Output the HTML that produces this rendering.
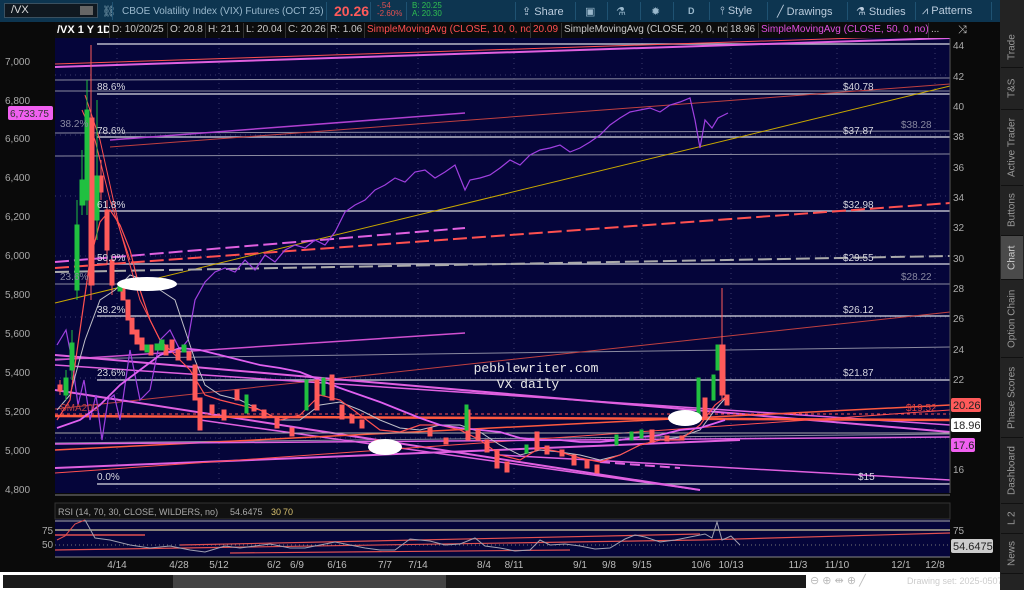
<!DOCTYPE html>
<html><head><meta charset="utf-8">
<style>
*{margin:0;padding:0;box-sizing:border-box}
body{width:1024px;height:590px;background:#0a0a0a;position:relative;overflow:hidden;font-family:"Liberation Sans",sans-serif}
.tb{position:absolute;left:0;top:0;width:1024px;height:22px;background:#0d3550;color:#9ab8cc;font-size:11px}
.tb span{position:absolute;top:5px;white-space:nowrap}
.sep{position:absolute;top:2px;width:1px;height:18px;background:#1f5272}
.info{position:absolute;left:55px;top:22px;height:16px;width:895px;background:#0c0c0c;font-size:10px;color:#c8c8c8;white-space:nowrap}
.info span{position:absolute;top:1px;padding:0 2px;border-right:1px solid #333;height:15px;overflow:hidden;line-height:14px}
.side{position:absolute;left:1000px;top:0;width:24px;height:590px;background:#232323}
.tab{position:absolute;left:1001px;width:22px;color:#9a9a9a;font-size:10px;writing-mode:vertical-rl;transform:rotate(180deg);display:flex;align-items:center;justify-content:center;border-top:1px solid #111}
</style></head><body>
<div class="tb">
 <div style="position:absolute;left:4px;top:3px;width:94px;height:15px;background:#101820;border:1px solid #3a5060;color:#ddd;font-size:11px;padding-left:6px">/VX</div>
 <div style="position:absolute;left:80px;top:6px;width:13px;height:9px;background:#666"></div>
 <span style="left:102px;color:#8ab">⛓</span>
 <div class="sep" style="left:112px"></div>
 <span style="left:122px;font-size:10px;top:6px">CBOE Volatility Index (VIX) Futures (OCT 25)</span>
 <div class="sep" style="left:326px"></div>
 <span style="left:334px;top:3px;color:#ff5a5a;font-size:14px;font-weight:bold">20.26</span>
 <div class="sep" style="left:370px"></div>
 <span style="left:377px;top:2px;color:#e05050;font-size:8px;line-height:8px">-.54<br>-2.60%</span>
 <div class="sep" style="left:406px"></div>
 <span style="left:412px;top:2px;color:#30c050;font-size:8px;line-height:8px">B: 20.25<br>A: 20.30</span>
 <div class="sep" style="left:515px"></div>
 <span style="left:522px;color:#bcd">⇪ Share</span>
 <div class="sep" style="left:575px"></div><span style="left:585px">▣</span>
 <div class="sep" style="left:607px"></div><span style="left:616px">⚗</span>
 <div class="sep" style="left:640px"></div><span style="left:651px">✹</span>
 <div class="sep" style="left:673px"></div><span style="left:688px;font-weight:bold;font-size:9px;top:6px">D</span>
 <div class="sep" style="left:709px"></div><span style="left:720px;color:#bcd">⫯ Style</span>
 <div class="sep" style="left:767px"></div><span style="left:777px;color:#bcd">╱ Drawings</span>
 <div class="sep" style="left:847px"></div><span style="left:856px;color:#bcd">⚗ Studies</span>
 <div class="sep" style="left:915px"></div><span style="left:922px;color:#bcd">⩘ Patterns</span>
 <div class="sep" style="left:991px"></div><span style="left:1005px">☰</span>
</div>
<div class="info">
 <span style="left:0;width:55px;color:#fff;font-weight:bold;font-size:11px">/VX 1 Y 1D</span>
 <span style="left:55px;width:58px">D: 10/20/25</span>
 <span style="left:113px;width:38px">O: 20.8</span>
 <span style="left:151px;width:38px">H: 21.1</span>
 <span style="left:189px;width:42px">L: 20.04</span>
 <span style="left:231px;width:42px">C: 20.26</span>
 <span style="left:273px;width:37px">R: 1.06</span>
 <span style="left:310px;width:166px;color:#ff5050">SimpleMovingAvg (CLOSE, 10, 0, no)</span>
 <span style="left:476px;width:31px;color:#ff5050">20.09</span>
 <span style="left:507px;width:166px">SimpleMovingAvg (CLOSE, 20, 0, no)</span>
 <span style="left:673px;width:31px">18.96</span>
 <span style="left:704px;width:170px;color:#e050e0">SimpleMovingAvg (CLOSE, 50, 0, no)</span>
 <span style="left:874px;border:none">...</span>
</div>
<div style="position:absolute;left:958px;top:24px;color:#ccc;font-size:11px">⤨</div>

<svg style="position:absolute;left:0;top:38px" width="1000" height="534" viewBox="0 38 1000 534">
<rect x="55" y="38" width="895" height="455" fill="#05053a"/>
<rect x="55" y="517" width="895" height="40" fill="#05053a"/>
<g stroke="#3a3a6a" stroke-dasharray="1 4" stroke-width="1">
<line x1="117" y1="38" x2="117" y2="493"/><line x1="219" y1="38" x2="219" y2="493"/><line x1="337" y1="38" x2="337" y2="493"/><line x1="418" y1="38" x2="418" y2="493"/><line x1="514" y1="38" x2="514" y2="493"/><line x1="642" y1="38" x2="642" y2="493"/><line x1="731" y1="38" x2="731" y2="493"/><line x1="837" y1="38" x2="837" y2="493"/><line x1="935" y1="38" x2="935" y2="493"/>
<line x1="55" y1="75" x2="950" y2="75"/><line x1="55" y1="135" x2="950" y2="135"/><line x1="55" y1="196" x2="950" y2="196"/><line x1="55" y1="256" x2="950" y2="256"/><line x1="55" y1="317" x2="950" y2="317"/><line x1="55" y1="378" x2="950" y2="378"/><line x1="55" y1="438" x2="950" y2="438"/>
</g>
<g stroke="#b8b8c8" stroke-width="1.5">
<line x1="97" y1="44" x2="950" y2="44"/>
<line x1="97" y1="94" x2="950" y2="94"/>
<line x1="97" y1="137" x2="950" y2="137"/>
<line x1="97" y1="211" x2="950" y2="211"/>
<line x1="97" y1="264" x2="950" y2="264"/>
<line x1="97" y1="316" x2="950" y2="316"/>
<line x1="97" y1="380" x2="950" y2="380"/>
<line x1="97" y1="484" x2="950" y2="484"/>
</g>
<g stroke="#8a8aa0" stroke-width="1">
<line x1="55" y1="91" x2="950" y2="91"/><line x1="55" y1="80" x2="950" y2="78"/>
<line x1="55" y1="156" x2="950" y2="154"/><line x1="55" y1="284" x2="950" y2="284"/>
<line x1="55" y1="133" x2="950" y2="131"/><line x1="55" y1="359" x2="950" y2="347"/>
<line x1="55" y1="443" x2="950" y2="434"/>
</g>
<line x1="55" y1="303" x2="950" y2="86" stroke="#c8a800" stroke-width="1"/>
<line x1="55" y1="67" x2="950" y2="38" stroke="#e060e0" stroke-width="2"/>
<line x1="55" y1="64" x2="950" y2="35" stroke="#ff5050" stroke-width="1"/>
<line x1="110" y1="140" x2="465" y2="113" stroke="#b040d0" stroke-width="1.5"/>
<line x1="110" y1="147" x2="950" y2="84" stroke="#c04040" stroke-width="1"/>
<line x1="55" y1="262" x2="465" y2="228" stroke="#e060e0" stroke-width="2" stroke-dasharray="14 5"/>
<line x1="55" y1="268" x2="950" y2="203" stroke="#ff5050" stroke-width="2" stroke-dasharray="14 5"/>
<line x1="55" y1="272" x2="950" y2="256" stroke="#aaa" stroke-width="2" stroke-dasharray="14 5"/>
<line x1="55" y1="360" x2="465" y2="333" stroke="#d050d0" stroke-width="1.5"/>
<line x1="55" y1="409" x2="950" y2="312" stroke="#c04040" stroke-width="1"/>
<line x1="55" y1="355" x2="950" y2="432" stroke="#e060e0" stroke-width="2"/>
<line x1="55" y1="365" x2="950" y2="425" stroke="#e060e0" stroke-width="1.5"/>
<line x1="55" y1="390" x2="700" y2="490" stroke="#e060e0" stroke-width="2"/>
<line x1="200" y1="420" x2="700" y2="490" stroke="#e060e0" stroke-width="1.5"/>
<line x1="55" y1="416" x2="950" y2="420" stroke="#ff5a40" stroke-width="2.5"/>
<line x1="55" y1="450" x2="950" y2="405" stroke="#ff5a40" stroke-width="1.5"/>
<line x1="55" y1="468" x2="740" y2="440" stroke="#e060e0" stroke-width="2"/>
<line x1="55" y1="473" x2="950" y2="410" stroke="#ff5050" stroke-width="1"/>
<line x1="55" y1="414" x2="950" y2="414" stroke="#ff5050" stroke-width="1" stroke-dasharray="3 3"/>
<line x1="55" y1="433" x2="950" y2="433" stroke="#aaa" stroke-width="1"/>
<line x1="55" y1="444" x2="950" y2="437" stroke="#e060e0" stroke-width="1.5"/>
<line x1="500" y1="455" x2="950" y2="480" stroke="#e060e0" stroke-width="1.5"/>
<line x1="600" y1="462" x2="680" y2="468" stroke="#e060e0" stroke-width="2" stroke-dasharray="10 5"/>
<polyline fill="none" stroke="#a040e0" stroke-width="1.2" points="57,345 66,330 72,360 78,405 84,380 90,420 96,395 102,440 108,400 114,395 120,420 130,350 140,400 150,390 160,340 170,330 180,350 188,340 195,300 205,282 215,272 225,268 235,272 245,260 255,270 265,255 275,262 285,250 295,245 305,248 315,240 325,245 335,232 345,212 355,205 365,200 375,190 385,185 395,178 405,182 415,172 425,170 435,178 445,172 455,165 465,190 470,180 480,178 490,175 500,168 510,160 520,165 530,155 540,150 550,148 560,145 570,152 580,148 590,142 600,135 610,125 620,118 630,112 640,110 650,108 660,112 670,105 680,102 690,98 695,120 700,148 705,120 712,128 718,118 728,113"/>
<polyline fill="none" stroke="#c0c0c8" stroke-width="1" points="57,410 70,395 85,340 100,300 115,290 130,275 145,280 160,290 175,300 185,330 195,360 205,385 220,395 240,400 260,410 280,420 300,420 320,405 340,402 360,410 380,420 400,428 420,430 440,425 460,425 480,432 500,445 520,455 540,450 560,452 580,455 600,460 620,455 640,445 660,440 680,437 700,430 715,410 728,395"/>
<polyline fill="none" stroke="#ff5050" stroke-width="1.2" points="57,420 70,400 80,330 90,260 100,222 110,210 120,225 130,250 140,290 150,320 160,340 175,355 190,370 205,395 220,400 240,405 260,410 280,420 300,415 320,395 340,400 360,415 380,430 400,432 420,425 440,425 460,430 480,440 500,455 520,460 540,448 560,452 580,458 600,462 620,455 640,445 660,440 680,440 700,425 715,405 728,395"/>
<polyline fill="none" stroke="#ff5050" stroke-width="1" points="85,95 100,140 120,230 140,300 160,340"/>
<polyline fill="none" stroke="#ff5050" stroke-width="1" points="82,110 95,140 110,200 130,260"/>
<polyline fill="none" stroke="#e060f0" stroke-width="1.8" points="57,428 80,420 100,405 120,385 140,370 160,355 180,348 200,350 220,355 240,360 260,365 280,368 300,372 320,380 340,388 360,395 380,402 400,410 420,418 440,425 460,428 480,430 500,432 520,438 540,440 560,440 580,442 600,442 620,440 640,437 660,435 680,430 700,428 725,420"/>
<g stroke-width="1">
<g stroke="#ff5a5a" fill="#ff5a5a">
<line x1="60" y1="380" x2="60" y2="395"/><rect x="58" y="385" width="4" height="6"/>
<line x1="91" y1="45" x2="91" y2="300"/><rect x="89" y="118" width="5" height="167"/>
<line x1="101" y1="160" x2="101" y2="200"/><rect x="99" y="176" width="4" height="16"/>
<line x1="107" y1="200" x2="107" y2="265"/><rect x="105" y="210" width="4" height="40"/>
<line x1="112" y1="255" x2="112" y2="295"/><rect x="110" y="260" width="4" height="25"/>
<rect x="121" y="285" width="4" height="15"/><rect x="126" y="300" width="4" height="20"/><rect x="130" y="318" width="4" height="16"/><rect x="135" y="330" width="4" height="14"/><rect x="140" y="338" width="4" height="12"/><rect x="149" y="345" width="4" height="10"/><rect x="164" y="345" width="4" height="10"/><rect x="170" y="340" width="4" height="10"/><rect x="176" y="350" width="4" height="10"/><rect x="187" y="352" width="4" height="8"/><rect x="193" y="365" width="4" height="35"/><rect x="198" y="398" width="4" height="32"/>
<rect x="210" y="405" width="4" height="8"/><rect x="222" y="410" width="4" height="10"/><rect x="235" y="390" width="4" height="10"/><rect x="252" y="405" width="4" height="6"/><rect x="262" y="410" width="4" height="8"/><rect x="275" y="418" width="4" height="10"/><rect x="290" y="428" width="4" height="8"/><rect x="315" y="380" width="4" height="30"/><rect x="330" y="375" width="4" height="25"/><rect x="340" y="405" width="4" height="14"/><rect x="350" y="415" width="4" height="8"/><rect x="360" y="420" width="4" height="8"/><rect x="375" y="440" width="4" height="10"/><rect x="388" y="444" width="4" height="10"/><rect x="428" y="428" width="4" height="8"/><rect x="444" y="438" width="4" height="6"/><rect x="466" y="410" width="4" height="30"/><rect x="476" y="430" width="4" height="10"/><rect x="485" y="440" width="4" height="12"/><rect x="495" y="450" width="4" height="18"/><rect x="505" y="462" width="4" height="10"/><rect x="535" y="432" width="4" height="18"/><rect x="545" y="446" width="4" height="8"/><rect x="560" y="450" width="4" height="6"/><rect x="572" y="455" width="4" height="10"/><rect x="585" y="460" width="4" height="8"/><rect x="595" y="465" width="4" height="8"/><rect x="650" y="430" width="4" height="12"/><rect x="665" y="436" width="4" height="5"/><rect x="680" y="436" width="4" height="4"/><rect x="703" y="398" width="4" height="20"/><line x1="722" y1="288" x2="722" y2="400"/><rect x="720" y="345" width="5" height="50"/><rect x="725" y="395" width="4" height="10"/>
</g>
<g stroke="#20c040" fill="#20c040">
<line x1="66" y1="370" x2="66" y2="400"/><rect x="64" y="378" width="4" height="17"/>
<line x1="72" y1="330" x2="72" y2="380"/><rect x="70" y="343" width="4" height="27"/>
<line x1="77" y1="200" x2="77" y2="300"/><rect x="75" y="225" width="4" height="65"/>
<line x1="82" y1="150" x2="82" y2="215"/><rect x="80" y="180" width="5" height="25"/>
<line x1="87" y1="80" x2="87" y2="215"/><rect x="85" y="110" width="4" height="90"/>
<line x1="97" y1="100" x2="97" y2="240"/><rect x="95" y="176" width="4" height="44"/>
<rect x="118" y="283" width="4" height="8"/><rect x="145" y="345" width="4" height="7"/><rect x="155" y="344" width="4" height="6"/><rect x="160" y="340" width="4" height="10"/><rect x="182" y="345" width="4" height="7"/><rect x="245" y="395" width="3" height="18"/><rect x="305" y="380" width="3" height="30"/><rect x="322" y="378" width="3" height="17"/><rect x="465" y="405" width="3" height="25"/><rect x="525" y="445" width="3" height="8"/><rect x="615" y="435" width="3" height="10"/><rect x="630" y="432" width="3" height="8"/><rect x="640" y="430" width="3" height="8"/><rect x="697" y="378" width="3" height="42"/><rect x="712" y="375" width="3" height="25"/><rect x="716" y="345" width="3" height="25"/>
</g>
</g>
<ellipse cx="147" cy="284" rx="30" ry="7" fill="#fff"/>
<ellipse cx="385" cy="447" rx="17" ry="8" fill="#fff"/>
<ellipse cx="685" cy="418" rx="17" ry="8" fill="#fff"/>
<g font-family="Liberation Sans" font-size="10" fill="#d8d8e0">
<text x="97" y="90">88.6%</text><text x="97" y="134">78.6%</text><text x="97" y="208">61.8%</text><text x="97" y="261">50.0%</text><text x="97" y="313">38.2%</text><text x="97" y="376">23.6%</text><text x="97" y="480">0.0%</text>
<text x="843" y="90">$40.78</text><text x="843" y="134">$37.87</text><text x="843" y="208">$32.98</text><text x="843" y="261">$29.55</text><text x="843" y="313">$26.12</text><text x="843" y="376">$21.87</text><text x="858" y="480">$15</text>
</g>
<g font-family="Liberation Sans" font-size="10" fill="#8888a0">
<text x="60" y="127">38.2%</text><text x="60" y="280">23.6%</text><text x="901" y="128">$38.28</text><text x="901" y="280">$28.22</text>
</g>
<text x="60" y="411" font-family="Liberation Sans" font-size="10" fill="#c04040">SMA200</text>
<text x="906" y="411" font-family="Liberation Sans" font-size="10" fill="#e04040">$19.52</text>
<text x="536" y="372" text-anchor="middle" font-family="Liberation Mono" font-size="13" fill="#e8e8e8">pebblewriter.com</text>
<text x="528" y="388" text-anchor="middle" font-family="Liberation Mono" font-size="13" fill="#e8e8e8">VX daily</text>
<line x1="950" y1="38" x2="950" y2="493" stroke="#555"/>
<g font-family="Liberation Sans" font-size="10" fill="#aaa">
<text x="953" y="49">44</text><text x="953" y="80">42</text><text x="953" y="110">40</text><text x="953" y="140">38</text><text x="953" y="171">36</text><text x="953" y="201">34</text><text x="953" y="231">32</text><text x="953" y="262">30</text><text x="953" y="292">28</text><text x="953" y="322">26</text><text x="953" y="353">24</text><text x="953" y="383">22</text><text x="953" y="473">16</text>
<text x="5" y="65">7,000</text><text x="5" y="104">6,800</text><text x="5" y="142">6,600</text><text x="5" y="181">6,400</text><text x="5" y="220">6,200</text><text x="5" y="259">6,000</text><text x="5" y="298">5,800</text><text x="5" y="337">5,600</text><text x="5" y="376">5,400</text><text x="5" y="415">5,200</text><text x="5" y="454">5,000</text><text x="5" y="493">4,800</text>
</g>
<rect x="951" y="398" width="30" height="14" rx="2" fill="#ff5a5a"/><text x="953" y="409" font-family="Liberation Sans" font-size="11" fill="#222">20.26</text>
<rect x="951" y="418" width="30" height="14" rx="2" fill="#fff"/><text x="953" y="429" font-family="Liberation Sans" font-size="11" fill="#222">18.96</text>
<rect x="951" y="438" width="24" height="14" rx="2" fill="#f060f0"/><text x="953" y="449" font-family="Liberation Sans" font-size="11" fill="#222">17.6</text>
<rect x="8" y="106" width="45" height="14" rx="2" fill="#f060f0"/><text x="10" y="117" font-family="Liberation Sans" font-size="10" fill="#333">6,733.75</text>
<rect x="55" y="494" width="895" height="2" fill="#444"/>
<rect x="55" y="503" width="895" height="16" fill="#111" stroke="#333"/>
<text x="58" y="515" font-family="Liberation Sans" font-size="9" fill="#aaa">RSI (14, 70, 30, CLOSE, WILDERS, no)</text>
<text x="230" y="515" font-family="Liberation Sans" font-size="9" fill="#aaa">54.6475</text>
<text x="271" y="515" font-family="Liberation Sans" font-size="9" fill="#d8c070">30</text>
<text x="283" y="515" font-family="Liberation Sans" font-size="9" fill="#d8c070">70</text>
<line x1="55" y1="530" x2="950" y2="530" stroke="#b0a890" stroke-width="1.5"/>
<line x1="55" y1="545" x2="950" y2="545" stroke="#777" stroke-dasharray="1 3"/>
<line x1="55" y1="557" x2="950" y2="557" stroke="#888"/>
<line x1="55" y1="521" x2="950" y2="521" stroke="#aaa"/>
<line x1="55" y1="535" x2="145" y2="535" stroke="#e05050" stroke-width="1.5"/>
<line x1="55" y1="550" x2="700" y2="540" stroke="#e05050" stroke-width="1.2"/>
<line x1="180" y1="545" x2="700" y2="534" stroke="#e05050" stroke-width="1.2"/>
<line x1="230" y1="553" x2="570" y2="550" stroke="#e05050" stroke-width="1.2"/>
<line x1="700" y1="540" x2="950" y2="533" stroke="#e05050" stroke-width="1.2"/>
<polyline fill="none" stroke="#e05050" stroke-width="1" points="57,540 65,536 75,524 85,520"/>
<polyline fill="none" stroke="#a0a0b0" stroke-width="1" points="85,520 95,538 110,540 130,545 150,548 170,546 190,550 205,552 215,549 225,546 240,548 255,546 270,544 290,548 305,548 320,545 335,542 350,545 365,548 380,550 395,550 410,539 430,541 445,545 460,544 475,538 485,546 500,548 515,551 530,550 540,540 550,545 565,544 580,546 595,549 610,548 625,539 635,535 645,537 660,542 675,540 690,537 705,534 712,538 717,522 722,540 731,536 740,545"/>
<g font-family="Liberation Sans" font-size="10" fill="#aaa">
<text x="42" y="534">75</text><text x="42" y="548">50</text><text x="953" y="534">75</text>
</g>
<rect x="951" y="539" width="42" height="14" rx="2" fill="#ccc"/><text x="953" y="550" font-family="Liberation Sans" font-size="11" fill="#222">54.6475</text>
<g font-family="Liberation Sans" font-size="10" fill="#bbb" text-anchor="middle">
<text x="117" y="568">4/14</text><text x="179" y="568">4/28</text><text x="219" y="568">5/12</text><text x="274" y="568">6/2</text><text x="297" y="568">6/9</text><text x="337" y="568">6/16</text><text x="385" y="568">7/7</text><text x="418" y="568">7/14</text><text x="484" y="568">8/4</text><text x="514" y="568">8/11</text><text x="580" y="568">9/1</text><text x="609" y="568">9/8</text><text x="642" y="568">9/15</text><text x="701" y="568">10/6</text><text x="731" y="568">10/13</text><text x="798" y="568">11/3</text><text x="837" y="568">11/10</text><text x="901" y="568">12/1</text><text x="935" y="568">12/8</text>
</g>
</svg>
<div style="position:absolute;left:0;top:572px;width:1000px;height:18px;background:#fff"></div>
<div style="position:absolute;left:3px;top:575px;width:803px;height:13px;background:#1a1a1a"></div>
<div style="position:absolute;left:173px;top:575px;width:273px;height:13px;background:#444"></div>
<div style="position:absolute;left:810px;top:574px;color:#bbb;font-size:11px">⊖ ⊕ ⇹ ⊕ ╱</div>
<div style="position:absolute;left:907px;top:576px;color:#ccc;font-size:9px">Drawing set: 2025-0507</div>
<div class="side"></div>
<div class="tab" style="top:28px;height:40px">Trade</div>
<div class="tab" style="top:68px;height:42px">T&amp;S</div>
<div class="tab" style="top:110px;height:76px">Active Trader</div>
<div class="tab" style="top:186px;height:50px">Buttons</div>
<div class="tab" style="top:236px;height:44px;background:#4a4a4a;color:#ccc">Chart</div>
<div class="tab" style="top:280px;height:78px">Option Chain</div>
<div class="tab" style="top:358px;height:80px">Phase Scores</div>
<div class="tab" style="top:438px;height:66px">Dashboard</div>
<div class="tab" style="top:504px;height:30px">L 2</div>
<div class="tab" style="top:534px;height:40px">News</div>
</body></html>
